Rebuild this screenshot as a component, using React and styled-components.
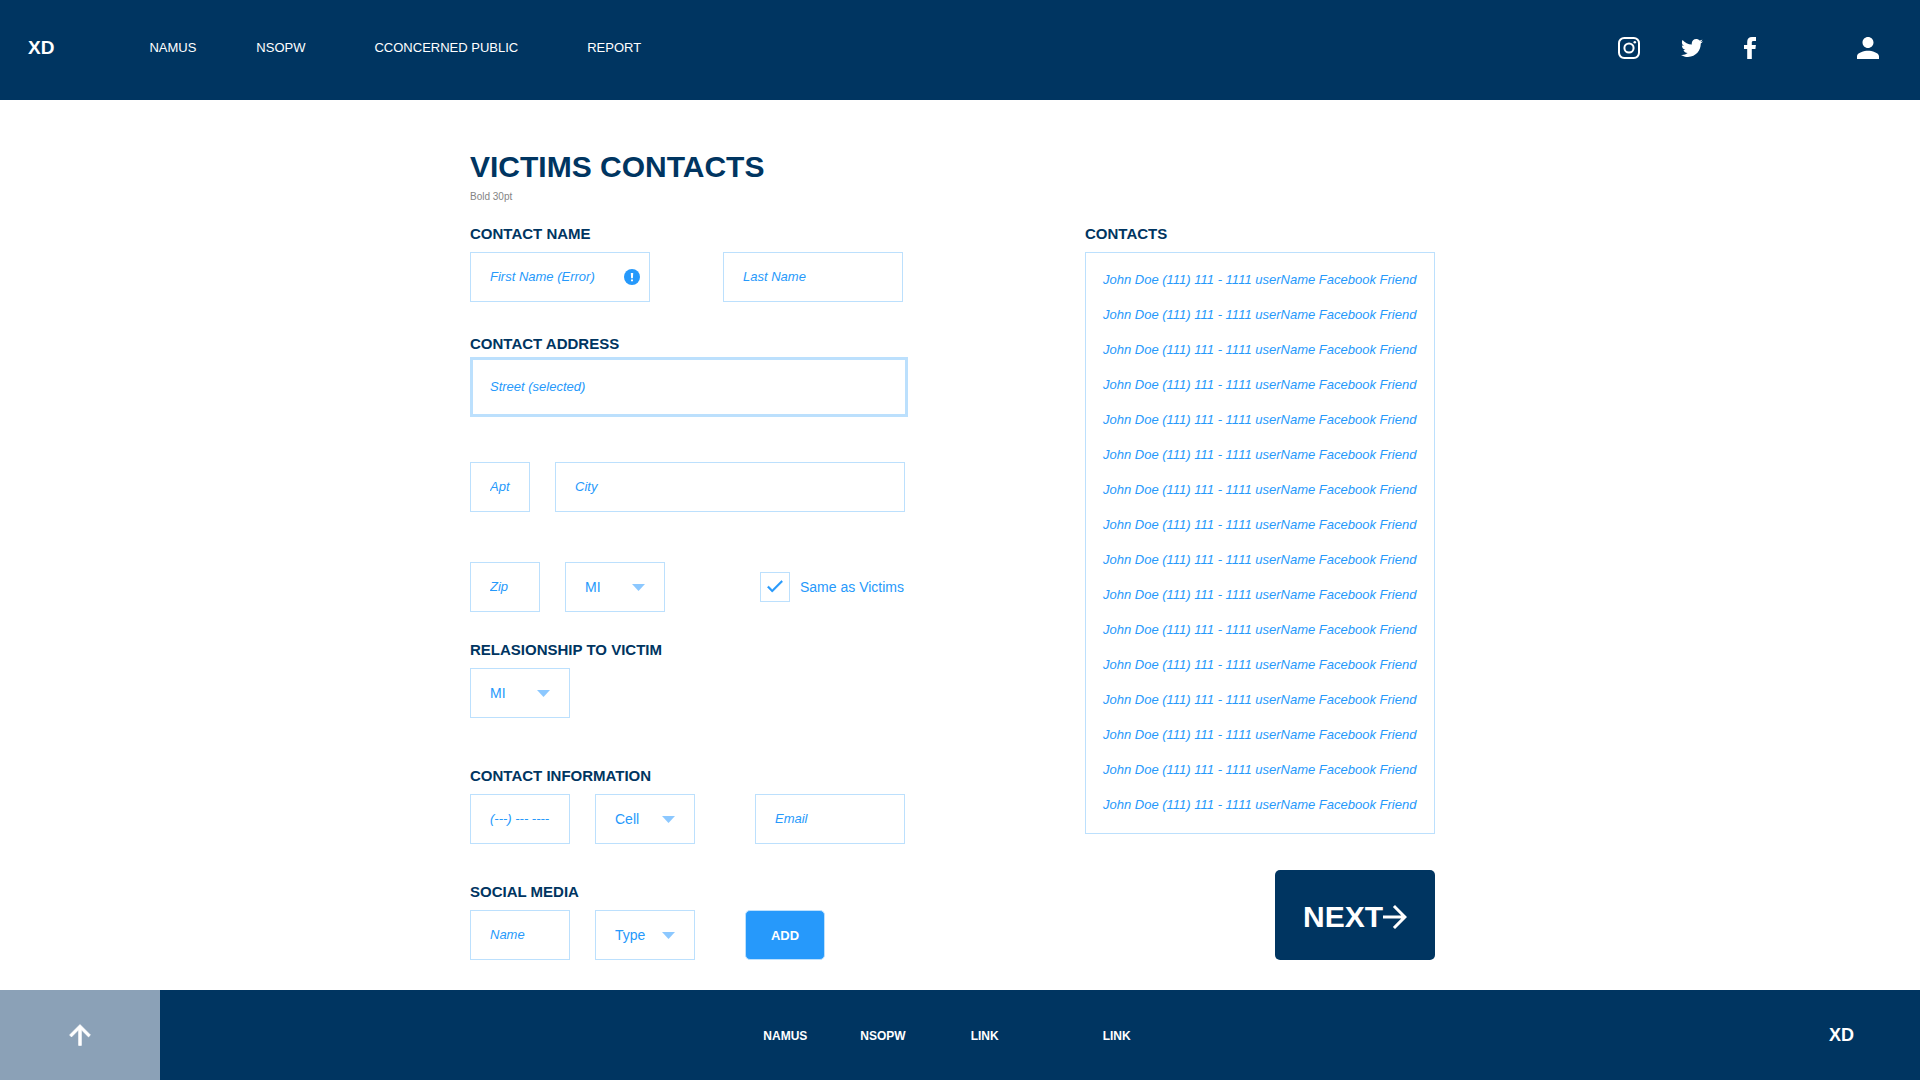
import React from "react";
import styled, { createGlobalStyle, css } from "styled-components";
import { FaTwitter } from "react-icons/fa";

const navy = "#003561";
const blue = "#2699FB";
const paleBlue = "#BCE0FD";

const GlobalStyle = createGlobalStyle`
  *, *::before, *::after { box-sizing: border-box; }
  body {
    margin: 0;
    background: #fff;
    color: ${navy};
    font-family: "Liberation Sans", Arial, Helvetica, sans-serif;
  }
  input, select, button { font-family: inherit; }
`;

const Page = styled.div`
  display: flex;
  flex-direction: column;
  min-height: 100vh;
`;

const Header = styled.header`
  display: flex;
  align-items: center;
  min-height: 100px;
  padding: 0 41px 4px 28px;
  background: ${navy};
  color: #fff;
`;

const Brand = styled.a`
  color: #fff;
  font-size: ${(p) => p.$size}px;
  font-weight: 700;
  text-decoration: none;
`;

const Nav = styled.nav`
  display: flex;
  align-items: center;
`;

const HeaderNav = styled(Nav)`
  margin-left: 95px;
`;

const NavLink = styled.a`
  margin-left: ${(p) => p.$before || 0}px;
  color: #fff;
  font-size: 13px;
  line-height: 16px;
  text-decoration: none;
`;

const FooterLink = styled(NavLink)`
  font-size: 12px;
  font-weight: 700;
`;

const Social = styled.div`
  display: flex;
  align-items: center;
  gap: 41px;
  margin-left: auto;
`;

const IconLink = styled.a`
  display: flex;
  color: #fff;
`;

const AccountLink = styled(IconLink)`
  margin-left: 101px;
`;

const Main = styled.main`
  flex: 1;
  width: 100%;
  max-width: 980px;
  margin: 0 auto;
  padding: 49px 15px 30px 0;
`;

const Title = styled.h1`
  margin: 0;
  font-size: 30px;
  line-height: 36px;
`;

const Caption = styled.p`
  margin: 6px 0 22px;
  color: #848484;
  font-size: 10px;
  line-height: 12px;
`;

const Columns = styled.form`
  display: flex;
  flex-wrap: wrap;
  justify-content: space-between;
`;

const FormColumn = styled.div`
  width: 438px;
`;

const SideColumn = styled.div`
  display: flex;
  flex-direction: column;
  width: 350px;
`;

const Section = styled.section`
  margin-top: ${(p) => p.$top || 0}px;
`;

const headingStyle = css`
  display: block;
  margin: 0 0 ${(p) => p.$gap || 9}px;
  font-size: 15px;
  font-weight: 700;
  line-height: 18px;
`;

const SectionLabel = styled.label`
  ${headingStyle}
`;

const SectionTitle = styled.h2`
  ${headingStyle}
`;

const Row = styled.div`
  display: flex;
  align-items: center;
  margin-top: ${(p) => p.$top || 0}px;
`;

const Slot = styled.div`
  position: relative;
  width: ${(p) => p.$width}px;
  margin-left: ${(p) => p.$before || 0}px;
`;

const TextInput = styled.input`
  display: block;
  width: 100%;
  height: 50px;
  padding: 0 8px 2px 19px;
  border: 1px solid ${paleBlue};
  border-radius: 0;
  outline: none;
  background: #fff;
  color: ${blue};
  font-size: 13px;
  font-style: italic;

  &::placeholder {
    color: ${blue};
    opacity: 1;
  }
`;

const SelectedInput = styled(TextInput)`
  height: 60px;
  padding-left: 17px;
  border-width: 3px;
`;

const ErrorMark = styled.svg`
  position: absolute;
  top: 17px;
  right: 10px;
  pointer-events: none;
`;

const Select = styled.select`
  display: block;
  width: 100%;
  height: 50px;
  padding: 0 35px 0 19px;
  border: 1px solid ${paleBlue};
  border-radius: 0;
  appearance: none;
  background: #fff;
  color: ${blue};
  font-size: 14px;
`;

const Caret = styled.svg`
  position: absolute;
  top: 22px;
  right: 20px;
  pointer-events: none;
`;

const CheckLabel = styled.label`
  position: relative;
  display: flex;
  align-items: center;
  gap: 10px;
  margin-left: 95px;
  color: ${blue};
  font-size: 14px;
  white-space: nowrap;
`;

const CheckInput = styled.input`
  width: 30px;
  height: 30px;
  margin: 0;
  border: 1px solid ${paleBlue};
  appearance: none;
  background: #fff;

  & + svg {
    visibility: hidden;
  }
  &:checked + svg {
    visibility: visible;
  }
`;

const CheckMark = styled.svg`
  position: absolute;
  top: 8px;
  left: 7px;
  pointer-events: none;
`;

const AddButton = styled.button`
  width: 80px;
  height: 50px;
  margin-left: 50px;
  border: 1px solid ${paleBlue};
  border-radius: 5px;
  background: ${blue};
  color: #fff;
  font-size: 13px;
  font-weight: 700;
`;

const ContactList = styled.ul`
  margin: 0;
  padding: 9px 17px 11px;
  border: 1px solid ${paleBlue};
  color: ${blue};
  font-size: 13px;
  font-style: italic;
  line-height: 35px;
  list-style: none;
  white-space: nowrap;
`;

const NextButton = styled.button`
  display: flex;
  align-items: center;
  justify-content: center;
  align-self: flex-end;
  width: 160px;
  height: 90px;
  margin-top: 36px;
  padding: 4px 0 0;
  border: 0;
  border-radius: 5px;
  background: ${navy};
  color: #fff;
  font-size: 30px;
  font-weight: 700;
`;

const Footer = styled.footer`
  display: grid;
  grid-template-columns: 1fr auto 1fr;
  align-items: center;
  min-height: 90px;
  background: ${navy};
`;

const BackToTop = styled.a`
  display: flex;
  align-items: center;
  justify-content: center;
  align-self: stretch;
  width: 160px;
  background: #8ba1b7;
  color: #fff;
`;

const FooterNav = styled(Nav)`
  padding: 2px 26px 0 0;
`;

const FooterBrand = styled(Brand)`
  justify-self: end;
  margin-right: 66px;
`;

const contacts = Array.from(
  { length: 16 },
  () => "John Doe (111) 111 - 1111 userName Facebook Friend"
);

function Field({ width, before, ...input }) {
  return (
    <Slot $width={width} $before={before}>
      <TextInput type="text" aria-label={input.placeholder} {...input} />
    </Slot>
  );
}

function Dropdown({ id, label, value, before }) {
  return (
    <Slot $width={100} $before={before}>
      <Select id={id} aria-label={label} defaultValue={value}>
        <option>{value}</option>
      </Select>
      <Caret width="13" height="7" viewBox="0 0 13 7" aria-hidden="true">
        <path d="M0 0H13L6.5 7Z" fill="#8CC8FF" />
      </Caret>
    </Slot>
  );
}

export default function App() {
  return (
    <Page id="top">
      <GlobalStyle />
      <Header>
        <Brand href="#top" $size={19}>XD</Brand>
        <HeaderNav aria-label="Main">
          <NavLink href="#namus">NAMUS</NavLink>
          <NavLink href="#nsopw" $before={60}>NSOPW</NavLink>
          <NavLink href="#public" $before={69}>CCONCERNED PUBLIC</NavLink>
          <NavLink href="#report" $before={69}>REPORT</NavLink>
        </HeaderNav>
        <Social>
          <IconLink href="#instagram" aria-label="Instagram">
            <svg width="22" height="22" viewBox="0 0 22 22" fill="none" stroke="currentColor" strokeWidth="2">
              <rect x="1" y="1" width="20" height="20" rx="5.2" />
              <circle cx="11" cy="11" r="4.6" />
              <circle cx="16.8" cy="5.2" r="1.3" fill="currentColor" stroke="none" />
            </svg>
          </IconLink>
          <IconLink href="#twitter" aria-label="Twitter">
            <FaTwitter size={22} />
          </IconLink>
          <IconLink href="#facebook" aria-label="Facebook">
            <svg width="12" height="22" viewBox="0 0 12 22" fill="currentColor">
              <path d="M3.2 22V12H0V8H3.2V5C3.2 1.6 5 0 8 0H12V3.9H9.6C8.2 3.9 7.8 4.5 7.8 5.6V8H11.9L11.4 12H7.8V22Z" />
            </svg>
          </IconLink>
        </Social>
        <AccountLink href="#account" aria-label="Account">
          <svg width="22" height="22" viewBox="4 4 16 16" fill="currentColor">
            <path d="M12 12c2.21 0 4-1.79 4-4s-1.79-4-4-4-4 1.79-4 4 1.79 4 4 4zm0 2c-2.67 0-8 1.34-8 4v2h16v-2c0-2.66-5.33-4-8-4z" />
          </svg>
        </AccountLink>
      </Header>

      <Main>
        <Title>VICTIMS CONTACTS</Title>
        <Caption>Bold 30pt</Caption>
        <Columns onSubmit={(e) => e.preventDefault()}>
          <FormColumn>
            <Section>
              <SectionLabel htmlFor="first-name">CONTACT NAME</SectionLabel>
              <Row>
                <Slot $width={180}>
                  <TextInput id="first-name" type="text" placeholder="First Name (Error)" aria-invalid="true" />
                  <ErrorMark width="16" height="16" viewBox="0 0 16 16" aria-hidden="true">
                    <circle cx="8" cy="8" r="8" fill={blue} />
                    <path d="M6.8 4H9.2L8.9 9.2H7.1ZM7 10.4H9V12.2H7Z" fill="#fff" />
                  </ErrorMark>
                </Slot>
                <Field width={180} before={73} placeholder="Last Name" />
              </Row>
            </Section>

            <Section $top={33}>
              <SectionLabel htmlFor="street" $gap={4}>CONTACT ADDRESS</SectionLabel>
              <SelectedInput id="street" type="text" placeholder="Street (selected)" />
              <Row $top={45}>
                <Field width={60} placeholder="Apt" />
                <Field width={350} before={25} placeholder="City" />
              </Row>
              <Row $top={50}>
                <Field width={70} placeholder="Zip" />
                <Dropdown label="State" value="MI" before={25} />
                <CheckLabel>
                  <CheckInput type="checkbox" defaultChecked />
                  <CheckMark width="16" height="13" viewBox="3 5 18.4 15" aria-hidden="true">
                    <path
                      d="M9 16.17L4.83 12l-1.42 1.41L9 19 21 7l-1.41-1.41z"
                      fill={blue}
                      stroke={blue}
                      strokeWidth="0.6"
                    />
                  </CheckMark>
                  Same as Victims
                </CheckLabel>
              </Row>
            </Section>

            <Section $top={29}>
              <SectionLabel htmlFor="relationship">RELASIONSHIP TO VICTIM</SectionLabel>
              <Dropdown id="relationship" value="MI" />
            </Section>

            <Section $top={49}>
              <SectionLabel htmlFor="phone">CONTACT INFORMATION</SectionLabel>
              <Row>
                <Field id="phone" width={100} placeholder="(---) --- ----" />
                <Dropdown label="Phone type" value="Cell" before={25} />
                <Field width={150} before={60} placeholder="Email" />
              </Row>
            </Section>

            <Section $top={39}>
              <SectionLabel htmlFor="social-name">SOCIAL MEDIA</SectionLabel>
              <Row>
                <Field id="social-name" width={100} placeholder="Name" />
                <Dropdown label="Social media type" value="Type" before={25} />
                <AddButton type="button">ADD</AddButton>
              </Row>
            </Section>
          </FormColumn>

          <SideColumn>
            <SectionTitle>CONTACTS</SectionTitle>
            <ContactList>
              {contacts.map((contact, i) => (
                <li key={i}>{contact}</li>
              ))}
            </ContactList>
            <NextButton type="submit">
              NEXT
              <svg width="24" height="24" viewBox="4 4 16 16" fill="currentColor" aria-hidden="true">
                <path d="M12 4l-1.41 1.41L16.17 11H4v2h12.17l-5.58 5.59L12 20l8-8z" />
              </svg>
            </NextButton>
          </SideColumn>
        </Columns>
      </Main>

      <Footer>
        <BackToTop href="#top" aria-label="Back to top">
          <svg width="22" height="22" viewBox="4 4 16 16" fill="currentColor">
            <path
              d="M4.4 12l1.41 1.41L11 8.2V19.6h2V8.2l5.18 5.21L19.6 12l-7.6-7.6-7.6 7.6z"
              stroke="currentColor"
              strokeWidth="0.5"
            />
          </svg>
        </BackToTop>
        <FooterNav aria-label="Footer">
          <FooterLink href="#namus">NAMUS</FooterLink>
          <FooterLink href="#nsopw" $before={53}>NSOPW</FooterLink>
          <FooterLink href="#link-1" $before={65}>LINK</FooterLink>
          <FooterLink href="#link-2" $before={104}>LINK</FooterLink>
        </FooterNav>
        <FooterBrand href="#top" $size={18}>XD</FooterBrand>
      </Footer>
    </Page>
  );
}
